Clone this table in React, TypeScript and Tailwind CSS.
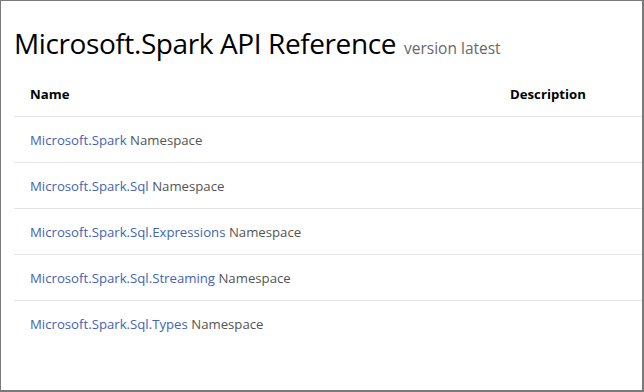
const rows = [
  { link: "Microsoft.Spark", desc: "" },
  { link: "Microsoft.Spark.Sql", desc: "" },
  { link: "Microsoft.Spark.Sql.Expressions", desc: "" },
  { link: "Microsoft.Spark.Sql.Streaming", desc: "" },
  { link: "Microsoft.Spark.Sql.Types", desc: "" },
];

export default function App() {
  return (
    <div
      className="w-[644px] h-[392px] overflow-hidden bg-white border-t border-l border-r-2 border-b-2 border-[#7a7a7a] text-black"
      style={{ fontFamily: '"Open Sans", "Noto Sans", sans-serif' }}
    >
      <div className="pl-[13px] pt-[24px]">
        <h1 className="flex items-baseline whitespace-nowrap">
          <span className="text-[28px] leading-[36px] tracking-[-0.4px]">
            Microsoft.Spark API Reference
          </span>
          <span className="ml-[8px] text-[15.5px] text-[#686868]">version latest</span>
        </h1>
        <table className="mt-[11px] w-[640px] border-collapse text-[13.2px]">
          <thead>
            <tr className="border-b border-[#e3e3e3]">
              <th className="h-[44px] pt-[2px] pl-[16px] text-left font-bold w-[496px]">Name</th>
              <th className="h-[44px] pt-[2px] text-left font-bold">Description</th>
            </tr>
          </thead>
          <tbody>
            {rows.map((r, i) => (
              <tr
                key={r.link}
                className={i < rows.length - 1 ? "border-b border-[#e3e3e3]" : ""}
              >
                <td className="h-[46px] pt-[3px] pl-[16px] whitespace-nowrap">
                  <a href="#" className="text-[#4563b2]">
                    {r.link}
                  </a>{" "}
                  <span className="text-[#545454]">Namespace</span>
                </td>
                <td className="h-[46px] pt-[3px] text-[#545454]">{r.desc}</td>
              </tr>
            ))}
          </tbody>
        </table>
      </div>
    </div>
  );
}
